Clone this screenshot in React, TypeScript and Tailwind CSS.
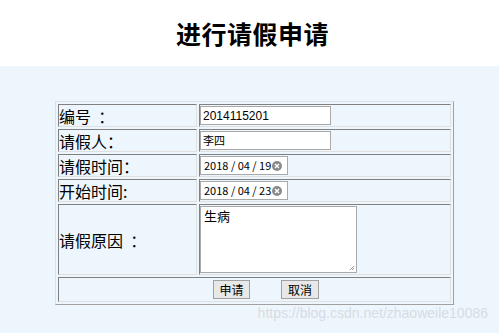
import React from "react";

const cjk = { fontFamily: '"Noto Sans CJK SC", "Noto Sans", sans-serif' };

function ClearIcon() {
  return (
    <svg width="10" height="10" viewBox="0 0 10 10" className="ml-[1px]">
      <circle cx="5" cy="5" r="5" fill="#8a8a8a" />
      <path d="M3 3 L7 7 M7 3 L3 7" stroke="#fff" strokeWidth="1.4" />
    </svg>
  );
}

function DateBox({ v }: { v: string }) {
  return (
    <div className="flex h-[19px] w-[88px] items-center border border-[#a9a9a9] bg-white pl-[3px] text-[11px] text-black" style={cjk}>
      <span>{v}</span>
      <ClearIcon />
    </div>
  );
}

const labelCell = "border border-t-[#808080] border-l-[#808080] border-b-[#e0e0e0] border-r-[#e0e0e0] p-0 text-[16px] leading-none text-black align-middle";
const valueCell = "border border-t-[#808080] border-l-[#808080] border-b-[#e0e0e0] border-r-[#e0e0e0] p-0 align-middle";

export default function App() {
  return (
    <div className="relative h-[333px] w-[499px] overflow-hidden bg-[#eef6fd]" style={cjk}>
      <div className="flex h-[66px] items-center justify-center bg-white pl-[6px]">
        <h1 className="text-[25px] font-bold leading-none tracking-[0.5px] text-black" style={cjk}>进行请假申请</h1>
      </div>
      <div className="pl-[55px] pt-[35px]">
        <table className="w-[399px] border-separate border-spacing-[2px] border border-t-[#e0e0e0] border-l-[#e0e0e0] border-b-[#a0a0a0] border-r-[#a0a0a0]">
          <tbody>
            <tr className="h-[23px]">
              <td className={labelCell + " w-[139px]"}>编号&nbsp;&nbsp;：</td>
              <td className={valueCell}>
                <div className="flex h-[19px] w-[131px] items-center border border-[#a9a9a9] bg-white pl-[2px] text-[12px] text-black" style={{ fontFamily: '"Liberation Sans", Arial, sans-serif' }}>2014115201</div>
              </td>
            </tr>
            <tr className="h-[23px]">
              <td className={labelCell}>请假人：</td>
              <td className={valueCell}>
                <div className="flex h-[19px] w-[131px] items-center border border-[#a9a9a9] bg-white pl-[2px] text-[11px] text-black">李四</div>
              </td>
            </tr>
            <tr className="h-[23px]">
              <td className={labelCell}>请假时间：</td>
              <td className={valueCell}>
                <DateBox v="2018 / 04 / 19" />
              </td>
            </tr>
            <tr className="h-[23px]">
              <td className={labelCell}>开始时间:</td>
              <td className={valueCell}>
                <DateBox v="2018 / 04 / 23" />
              </td>
            </tr>
            <tr className="h-[71px]">
              <td className={labelCell}>请假原因&nbsp;&nbsp;：</td>
              <td className={valueCell}>
                <div className="relative h-[67px] w-[157px] border border-[#a9a9a9] bg-white pl-[3px] pt-[1px] text-[13px] leading-tight text-black">
                  生病
                  <svg width="6" height="6" viewBox="0 0 6 6" className="absolute bottom-[1px] right-[1px]">
                    <path d="M5 1 L1 5 M5 3 L3 5" stroke="#999" strokeWidth="1" />
                  </svg>
                </div>
              </td>
            </tr>
            <tr className="h-[25px]">
              <td colSpan={2} className={valueCell}>
                <div className="flex gap-[31px] pl-[154px]">
                  <button className="h-[19px] w-[37px] border border-[#a0a0a0] bg-[#e8e8e8] text-[12px] leading-none text-black">申请</button>
                  <button className="h-[19px] w-[38px] border border-[#a0a0a0] bg-[#e8e8e8] text-[12px] leading-none text-black">取消</button>
                </div>
              </td>
            </tr>
          </tbody>
        </table>
      </div>
      <div className="absolute bottom-[13px] right-[11px] text-[14px] leading-none text-[#d6dce3]" style={{ fontFamily: '"Liberation Sans", Arial, sans-serif' }}>
        https://blog.csdn.net/zhaoweile10086
      </div>
    </div>
  );
}
